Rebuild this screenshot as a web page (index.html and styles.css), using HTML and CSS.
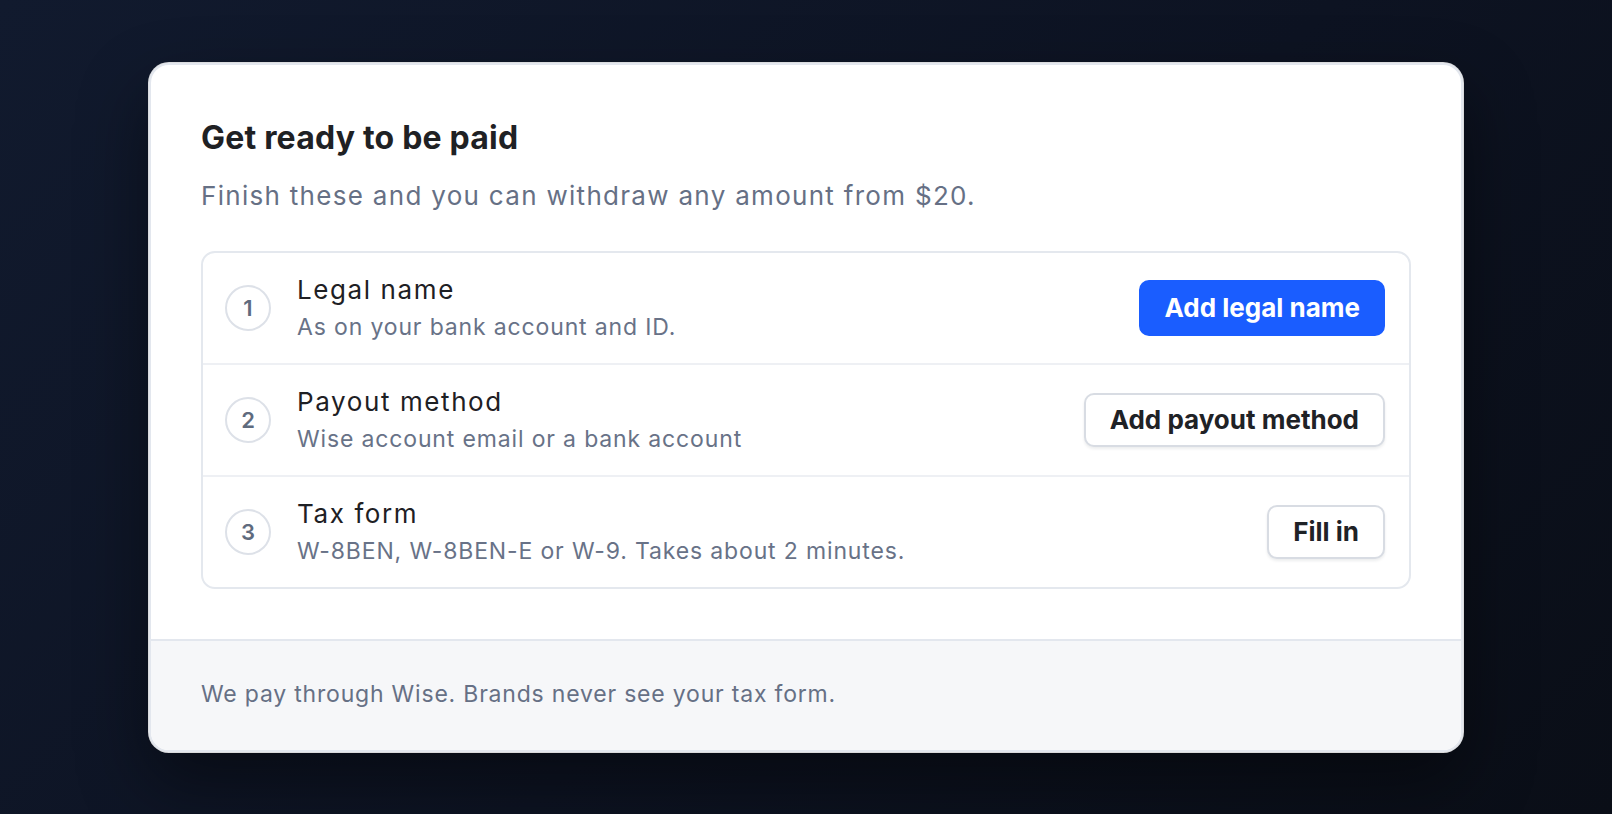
FILE: index.html
```html
<!DOCTYPE html>
<html lang="en">
<head>
<meta charset="utf-8">
<title>Get ready to be paid</title>
<link rel="stylesheet" href="styles.css">
</head>
<body>
<main class="stage">
  <section class="card">
    <div class="card-body">
      <h1 class="title">Get ready to be paid</h1>
      <p class="lead">Finish these and you can withdraw any amount from $20.</p>
      <ol class="steps">
        <li class="step">
          <span class="step-num">1</span>
          <div class="step-text">
            <div class="step-title">Legal name</div>
            <div class="step-desc">As on your bank account and ID.</div>
          </div>
          <button class="btn btn-primary" type="button">Add legal name</button>
        </li>
        <li class="step">
          <span class="step-num">2</span>
          <div class="step-text">
            <div class="step-title">Payout method</div>
            <div class="step-desc">Wise account email or a bank account</div>
          </div>
          <button class="btn btn-secondary" type="button">Add payout method</button>
        </li>
        <li class="step">
          <span class="step-num">3</span>
          <div class="step-text">
            <div class="step-title">Tax form</div>
            <div class="step-desc">W-8BEN, W-8BEN-E or W-9. Takes about 2 minutes.</div>
          </div>
          <button class="btn btn-secondary" type="button">Fill in</button>
        </li>
      </ol>
    </div>
    <footer class="card-foot">We pay through Wise. Brands never see your tax form.</footer>
  </section>
</main>
</body>
</html>
```
FILE: styles.css
```css
html, body {
  margin: 0;
  height: 100%;
}
body {
  background: linear-gradient(135deg, #111a2e 0%, #0d1322 55%, #0a0e17 100%);
  font-family: Inter, "Noto Sans", "Liberation Sans", sans-serif;
  color: #1e2024;
}
.stage {
  min-height: 100vh;
  display: flex;
  align-items: center;
  justify-content: center;
}
.card {
  width: 1314px;
  box-sizing: border-box;
  background: #fff;
  border: 2px solid #e3e7ee;
  border-radius: 20px;
  overflow: hidden;
  box-shadow: 0 0 0 1px rgba(255,255,255,0.85), 0 30px 70px rgba(0,0,0,0.45);
}
.card-body {
  padding: 54px 50px 50px;
}
.title {
  margin: 0;
  font-size: 32px;
  line-height: 38px;
  font-weight: 700;
  color: #1f2124;
  letter-spacing: 0.2px;
}
.lead {
  margin: 21px 0 0;
  font-size: 26px;
  line-height: 36px;
  color: #667085;
  letter-spacing: 1.3px;
}
.steps {
  list-style: none;
  margin: 37px 0 0;
  padding: 0;
  border: 2px solid #e4e8ee;
  border-radius: 14px;
}
.step {
  height: 110px;
  display: flex;
  align-items: center;
  padding: 0 24px 0 22px;
}
.step + .step {
  border-top: 2px solid #eef0f4;
}
.step-num {
  width: 46px;
  height: 46px;
  box-sizing: border-box;
  border: 2px solid #dde1e8;
  border-radius: 50%;
  display: flex;
  align-items: center;
  justify-content: center;
  font-size: 22px;
  font-weight: 600;
  color: #5f6b7e;
  flex: none;
}
.step-text {
  flex: 1;
  margin-left: 26px;
}
.step-title {
  font-size: 26px;
  line-height: 34px;
  color: #1e2024;
  letter-spacing: 1.6px;
}
.step-desc {
  margin-top: 5px;
  font-size: 23px;
  line-height: 30px;
  color: #687287;
  letter-spacing: 0.85px;
}
.btn {
  height: 56px;
  box-sizing: border-box;
  padding: 0 24px;
  border-radius: 10px;
  font-family: inherit;
  font-size: 26px;
  font-weight: 700;
  cursor: pointer;
  flex: none;
}
.btn-primary {
  padding: 0 23px;
  background: #1a5dff;
  border: 2px solid #1a5dff;
  color: #fff;
}
.btn-secondary {
  height: 54px;
  background: #fff;
  border: 2px solid #d8dce3;
  color: #1f2226;
  box-shadow: 0 2px 3px rgba(16, 24, 40, 0.08);
}
.card-foot {
  border-top: 2px solid #e3e7ee;
  background: #f6f7f9;
  padding: 38px 50px 41px;
  font-size: 23px;
  line-height: 30px;
  color: #667085;
  letter-spacing: 0.8px;
}
```
